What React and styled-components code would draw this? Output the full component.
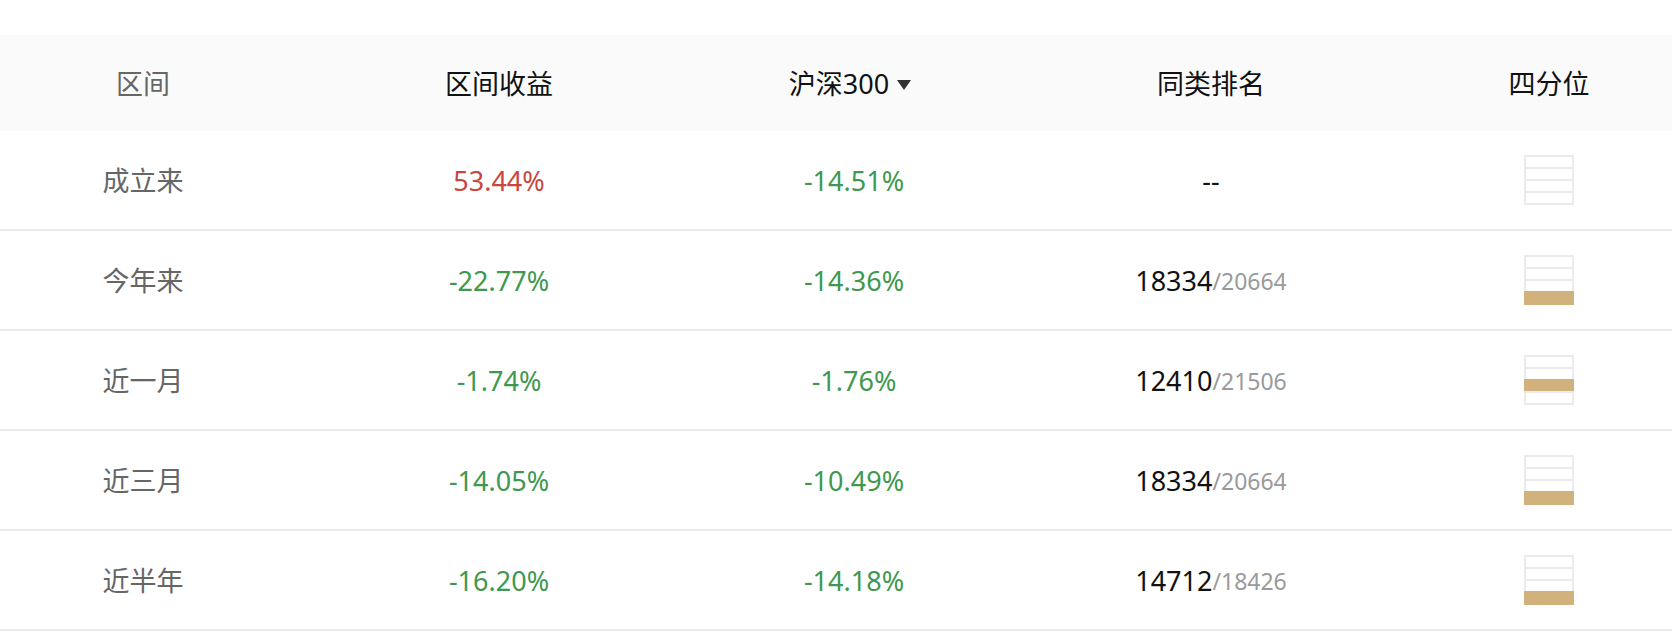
import React from 'react';
import styled, { createGlobalStyle } from 'styled-components';

const GlobalStyle = createGlobalStyle`
    html, body {
        margin: 0;
        padding: 0;
        background: #fff;
        font-family: "Noto Sans", "Noto Sans CJK SC", sans-serif;
    }
`

const Page = styled.div`
    width: 1672px;
    height: 642px;
    padding-top: 35px;
    box-sizing: border-box;
    background: #fff;
`
const Row = styled.div`
    display: grid;
    grid-template-columns: 286px 426px 276px 446px 1fr;
    padding-right: 8px;
    height: ${p => (p.head ? '96px' : '100px')};
    background: ${p => (p.head ? '#fafafa' : '#fff')};
    border-bottom: ${p => (p.head ? 'none' : '2px solid #ebebeb')};
    box-sizing: border-box;
`
const Cell = styled.div`
    display: flex;
    align-items: center;
    justify-content: center;
    padding-left: ${p => p.shift || 0}px;
    font-size: 27px;
    line-height: 1;
    color: ${p => p.color || '#111'};
    white-space: nowrap;
`
const Arrow = styled.span`
    display: inline-block;
    width: 0;
    height: 0;
    margin-left: 8px;
    margin-top: 4px;
    border-left: 7px solid transparent;
    border-right: 7px solid transparent;
    border-top: 10px solid #333;
`
const Rank = styled.span`
    color: #111;
    font-size: 27px;
`
const Total = styled.span`
    color: #9a9a9a;
    font-size: 23px;
    margin-top: 3px;
`
const Quartile = styled.div`
    width: 50px;
    display: flex;
    flex-direction: column;
`
const QCell = styled.div`
    height: 14px;
    box-sizing: border-box;
    border: 2px solid ${p => (p.on ? '#d2b27c' : '#ebebeb')};
    background: ${p => (p.on ? '#d2b27c' : '#fff')};
    & + & {
        margin-top: -2px;
    }
`

const RED = '#c9463f'
const GREEN = '#3f9850'

const rows = [
    { name: '成立来', ret: '53.44%', hs: '-14.51%', rank: null, q: 0 },
    { name: '今年来', ret: '-22.77%', hs: '-14.36%', rank: ['18334', '20664'], q: 4 },
    { name: '近一月', ret: '-1.74%', hs: '-1.76%', rank: ['12410', '21506'], q: 3 },
    { name: '近三月', ret: '-14.05%', hs: '-10.49%', rank: ['18334', '20664'], q: 4 },
    { name: '近半年', ret: '-16.20%', hs: '-14.18%', rank: ['14712', '18426'], q: 4 },
]

const colorOf = v => (v.startsWith('-') ? GREEN : RED)

export default function App() {
    return (
        <Page>
            <GlobalStyle />
            <Row head>
                <Cell color="#666">区间</Cell>
                <Cell>区间收益</Cell>
                <Cell>沪深300<Arrow /></Cell>
                <Cell>同类排名</Cell>
                <Cell>四分位</Cell>
            </Row>
            {rows.map(r => (
                <Row key={r.name}>
                    <Cell color="#666">{r.name}</Cell>
                    <Cell color={colorOf(r.ret)}>{r.ret}</Cell>
                    <Cell color={colorOf(r.hs)} shift={8}>{r.hs}</Cell>
                    <Cell>
                        {r.rank ? (
                            <>
                                <Rank>{r.rank[0]}</Rank>
                                <Total>/{r.rank[1]}</Total>
                            </>
                        ) : '--'}
                    </Cell>
                    <Cell>
                        <Quartile>
                            {[1, 2, 3, 4].map(i => (
                                <QCell key={i} on={r.q === i} />
                            ))}
                        </Quartile>
                    </Cell>
                </Row>
            ))}
        </Page>
    )
}
